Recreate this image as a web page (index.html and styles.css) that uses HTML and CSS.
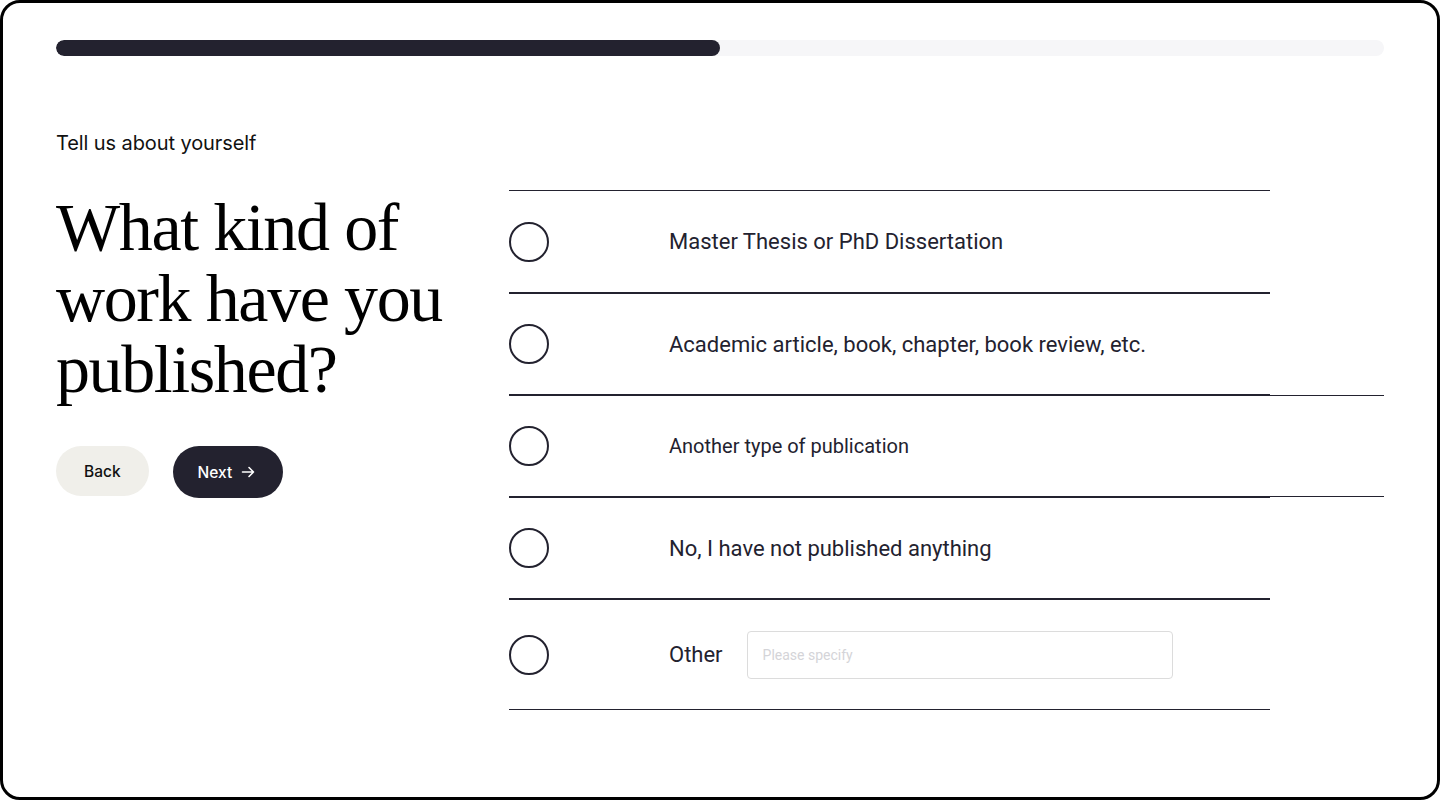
FILE: index.html
```html
<!DOCTYPE html>
<html lang="en">
<head>
<meta charset="utf-8">
<title>Tell us about yourself</title>
<link rel="stylesheet" href="styles.css">
</head>
<body>
<div class="frame">
  <div class="progress"><div class="progress-fill" style="width:50%"></div></div>
  <p class="eyebrow">Tell us about yourself</p>
  <div class="main">
    <div class="intro">
      <h1 class="question">What kind of work have you published?</h1>
      <div class="actions">
        <button class="btn btn-back" type="button">Back</button>
        <button class="btn btn-next" type="button">Next
          <svg class="arrow" width="16" height="16" viewBox="0 0 16 16" fill="none" stroke="currentColor" stroke-width="1.6" stroke-linecap="round" stroke-linejoin="round"><path d="M2.5 8h11M9 3.5L13.5 8 9 12.5"/></svg>
        </button>
      </div>
    </div>
    <ul class="options">
      <li class="option"><span class="radio"></span><span class="label">Master Thesis or PhD Dissertation</span></li>
      <li class="option"><span class="radio"></span><span class="label">Academic article, book, chapter, book review, etc.</span></li>
      <li class="option option-wide"><span class="radio"></span><span class="label">Another type of publication</span></li>
      <li class="option"><span class="radio"></span><span class="label">No, I have not published anything</span></li>
      <li class="option option-other"><span class="radio"></span><span class="label">Other</span><input class="specify" type="text" placeholder="Please specify"></li>
    </ul>
  </div>
</div>
</body>
</html>
```
FILE: styles.css
```css
* { box-sizing: border-box; }
html, body { margin: 0; padding: 0; background: #fff; }
body { width: 1440px; height: 800px; overflow: hidden; }

.frame {
  width: 1440px;
  height: 800px;
  border: 3px solid #000;
  border-radius: 20px;
  padding: 37px 53px 0;
  background: #fff;
}

.progress {
  height: 16px;
  border-radius: 8px;
  background: #f6f6f8;
  overflow: hidden;
}
.progress-fill {
  height: 100%;
  border-radius: 8px;
  background: #23222f;
}

.eyebrow {
  margin: 75px 0 0;
  font-family: Inter, "Noto Sans", sans-serif;
  font-size: 20px;
  line-height: 24px;
  color: #111;
  letter-spacing: -0.1px;
}

.main {
  display: grid;
  grid-template-columns: 453px 1fr;
  margin-top: 35px;
}

.question {
  margin: 2px 0 0;
  font-family: "Liberation Serif", "Times New Roman", serif;
  font-weight: 400;
  font-size: 68px;
  line-height: 71px;
  letter-spacing: -1.4px;
  color: #000;
  width: 400px;
}

.actions {
  display: flex;
  align-items: flex-start;
  gap: 24px;
  margin-top: 41px;
}
.btn {
  display: inline-flex;
  align-items: center;
  gap: 8px;
  border: none;
  border-radius: 26px;
  font-family: Inter, "Noto Sans", sans-serif;
  font-size: 15.5px;
  font-weight: 500;
  cursor: pointer;
}
.btn-back {
  height: 50px;
  padding: 0 28px;
  background: #f0efea;
  color: #111;
}
.btn-next {
  height: 52px;
  padding: 0 27px 0 25px;
  background: #23222f;
  color: #fff;
}
.arrow { display: block; }

.options {
  list-style: none;
  margin: 0;
  padding: 0;
}
.option {
  display: flex;
  align-items: center;
  width: 761px;
  height: 102px;
  border-top: 1px solid #23222f;
  border-bottom: 1px solid #23222f;
  font-family: Roboto, "Noto Sans", sans-serif;
  font-size: 22px;
  color: #23222f;
}
.option:first-child { height: 103px; }
.option-wide { width: 875px; font-size: 20px; }
.option-other { height: 111px; }

.radio {
  flex: none;
  width: 40px;
  height: 40px;
  border: 2px solid #23222f;
  border-radius: 50%;
  margin-right: 120px;
}

.specify {
  margin-left: 24px;
  width: 426px;
  height: 48px;
  border: 1px solid #dcdcdc;
  border-radius: 4px;
  padding: 0 15px;
  font-family: Roboto, "Noto Sans", sans-serif;
  font-size: 14px;
  color: #23222f;
  outline: none;
}
.specify::placeholder { color: #d4d4d8; }
```
